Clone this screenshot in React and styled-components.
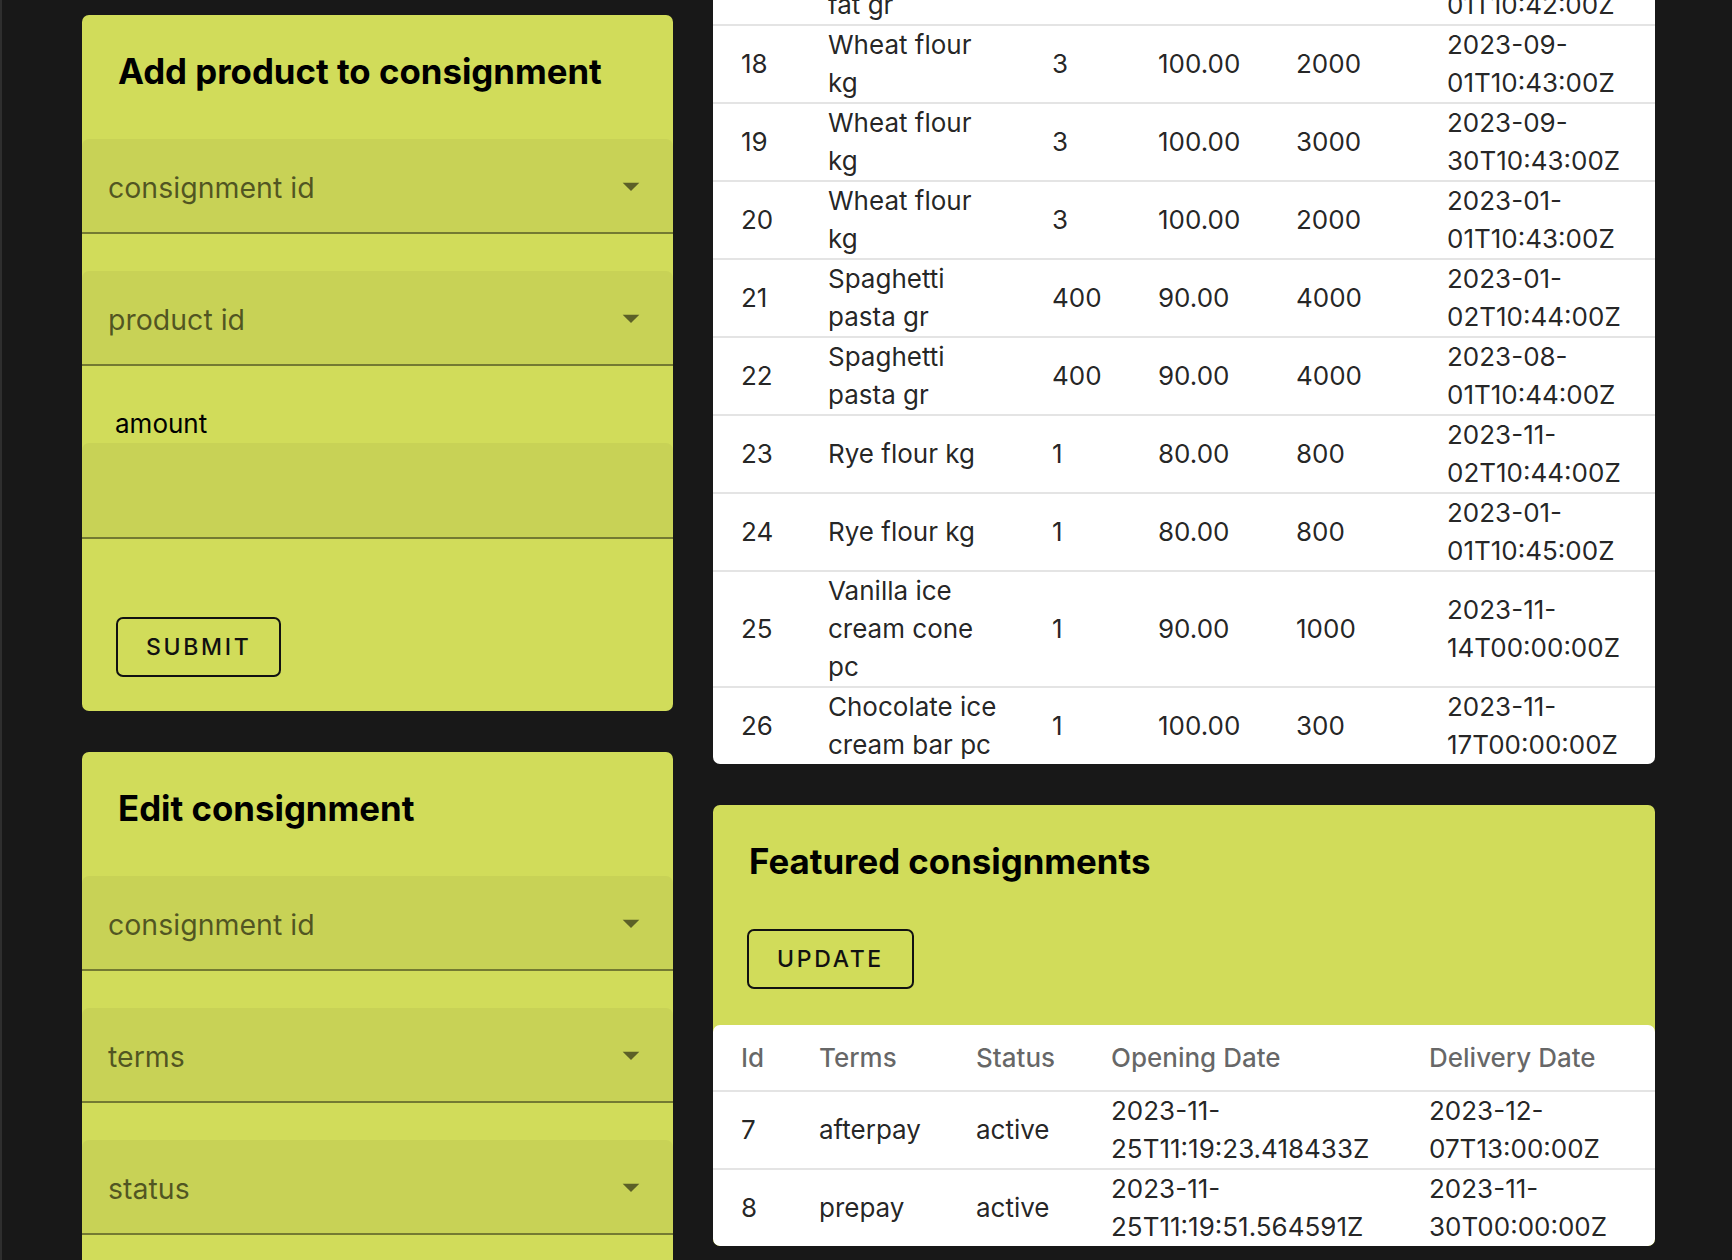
import React from "react";
import styled, { createGlobalStyle } from "styled-components";

const GlobalStyle = createGlobalStyle`
  html, body {
    margin: 0;
    overflow: hidden;
    background: #181818;
    font-family: Inter, "Noto Sans", "Liberation Sans", sans-serif;
  }
`;

const Page = styled.div`
  display: grid;
  grid-template-columns: 591px 942px;
  column-gap: 40px;
  align-items: start;
  height: 100vh;
  box-sizing: border-box;
  padding: 15px 0 0 80px;
  border-left: 2px solid #2e2e2e;
`;

const Column = styled.div`
  display: flex;
  flex-direction: column;
  gap: 41px;
`;

const Panel = styled.section`
  background: #d1dc5a;
  border-radius: 7px;
  padding: 30px 0 ${p => (p.$flush ? "0" : "34px")};
  overflow: hidden;
`;

const PanelTitle = styled.h2`
  margin: 0 0 41px;
  padding: 0 36px;
  font-size: 34.8px;
  line-height: 53px;
  font-weight: 700;
  color: #000;
`;

const Form = styled.div`
  display: flex;
  flex-direction: column;
  gap: 37px;
`;

const SelectBox = styled.div`
  height: 95px;
  box-sizing: border-box;
  display: flex;
  align-items: center;
  justify-content: space-between;
  padding: 0 22px 0 26px;
  background: rgba(0, 0, 0, 0.045);
  border-bottom: 2px solid rgba(0, 0, 0, 0.42);
  border-radius: 7px 7px 0 0;
`;

const SelectText = styled.span`
  padding-top: 4px;
  font-size: 28.5px;
  line-height: 38px;
  color: rgba(0, 0, 0, 0.6);
`;

const FieldGroup = styled.div`
  display: flex;
  flex-direction: column;
  margin-top: 2px;
`;

const FieldLabel = styled.label`
  padding-left: 33px;
  font-size: 26px;
  line-height: 38px;
  color: #000;
`;

const TextInput = styled.div`
  height: 96px;
  box-sizing: border-box;
  background: rgba(0, 0, 0, 0.045);
  border-bottom: 2px solid rgba(0, 0, 0, 0.42);
  border-radius: 7px 7px 0 0;
`;

const OutlineButton = styled.button`
  align-self: flex-start;
  margin: ${p => p.$top || "0"} 0 0 34px;
  height: 60px;
  box-sizing: border-box;
  padding: 0 28px;
  border: 2px solid #111;
  border-radius: 7px;
  background: transparent;
  font-family: inherit;
  font-size: 23px;
  font-weight: 500;
  letter-spacing: 2.7px;
  color: #111;
`;

const TableCard = styled.div`
  background: #fff;
  border-radius: 7px;
  overflow: hidden;
  margin-top: ${p => p.$top || "0"};
`;

const Table = styled.table`
  width: 100%;
  border-collapse: collapse;
  table-layout: fixed;
  font-size: 26px;
  line-height: 38px;
  color: rgba(0, 0, 0, 0.87);

  tbody tr:last-child td {
    border-bottom: none;
  }
`;

const Th = styled.th`
  padding: 13.5px 28px;
  text-align: left;
  font-weight: 500;
  color: rgba(0, 0, 0, 0.6);
  border-bottom: 2px solid #e4e4e4;
`;

const Td = styled.td`
  padding: 0 ${p => (p.$tight ? "23px" : "28px")} 0 28px;
  vertical-align: middle;
  border-bottom: 2px solid #e4e4e4;
`;

function ArrowDrop() {
  return (
    <svg width="40" height="40" viewBox="0 0 24 24" aria-hidden="true">
      <path d="M7 10l5 5 5-5z" fill="rgba(0,0,0,0.54)" />
    </svg>
  );
}

function Select({ placeholder }) {
  return (
    <SelectBox>
      <SelectText>{placeholder}</SelectText>
      <ArrowDrop />
    </SelectBox>
  );
}

const products = [
  [17, "Butter 82% fat gr", 200, "150.00", 1000, "2023-09-01T10:42:00Z"],
  [18, "Wheat flour kg", 3, "100.00", 2000, "2023-09-01T10:43:00Z"],
  [19, "Wheat flour kg", 3, "100.00", 3000, "2023-09-30T10:43:00Z"],
  [20, "Wheat flour kg", 3, "100.00", 2000, "2023-01-01T10:43:00Z"],
  [21, "Spaghetti pasta gr", 400, "90.00", 4000, "2023-01-02T10:44:00Z"],
  [22, "Spaghetti pasta gr", 400, "90.00", 4000, "2023-08-01T10:44:00Z"],
  [23, "Rye flour kg", 1, "80.00", 800, "2023-11-02T10:44:00Z"],
  [24, "Rye flour kg", 1, "80.00", 800, "2023-01-01T10:45:00Z"],
  [25, "Vanilla ice cream cone pc", 1, "90.00", 1000, "2023-11-14T00:00:00Z"],
  [26, "Chocolate ice cream bar pc", 1, "100.00", 300, "2023-11-17T00:00:00Z"],
];

const consignments = [
  [7, "afterpay", "active", "2023-11-25T11:19:23.418433Z", "2023-12-07T13:00:00Z"],
  [8, "prepay", "active", "2023-11-25T11:19:51.564591Z", "2023-11-30T00:00:00Z"],
];

export default function App() {
  return (
    <>
      <GlobalStyle />
      <Page>
        <Column>
          <Panel>
            <PanelTitle>Add product to consignment</PanelTitle>
            <Form>
              <Select placeholder="consignment id" />
              <Select placeholder="product id" />
              <FieldGroup>
                <FieldLabel>amount</FieldLabel>
                <TextInput />
              </FieldGroup>
              <OutlineButton $top="41px">SUBMIT</OutlineButton>
            </Form>
          </Panel>
          <Panel>
            <PanelTitle>Edit consignment</PanelTitle>
            <Form>
              <Select placeholder="consignment id" />
              <Select placeholder="terms" />
              <Select placeholder="status" />
              <Select placeholder="delivery date" />
              <OutlineButton $top="41px">SUBMIT</OutlineButton>
            </Form>
          </Panel>
        </Column>

        <Column>
          <TableCard $top="-67px">
            <Table>
              <colgroup>
                <col style={{ width: 87 }} />
                <col style={{ width: 224 }} />
                <col style={{ width: 106 }} />
                <col style={{ width: 138 }} />
                <col style={{ width: 151 }} />
                <col style={{ width: 236 }} />
              </colgroup>
              <tbody>
                {products.map(row => (
                  <tr key={row[0]}>
                    {row.map((cell, i) => (
                      <Td key={i} $tight={i === 1}>
                        {cell}
                      </Td>
                    ))}
                  </tr>
                ))}
              </tbody>
            </Table>
          </TableCard>

          <Panel $flush>
            <PanelTitle>Featured consignments</PanelTitle>
            <OutlineButton>UPDATE</OutlineButton>
            <TableCard $top="36px">
              <Table>
                <colgroup>
                  <col style={{ width: 78 }} />
                  <col style={{ width: 157 }} />
                  <col style={{ width: 135 }} />
                  <col style={{ width: 318 }} />
                  <col style={{ width: 254 }} />
                </colgroup>
                <thead>
                  <tr>
                    <Th>Id</Th>
                    <Th>Terms</Th>
                    <Th>Status</Th>
                    <Th>Opening Date</Th>
                    <Th>Delivery Date</Th>
                  </tr>
                </thead>
                <tbody>
                  {consignments.map(row => (
                    <tr key={row[0]}>
                      {row.map((cell, i) => (
                        <Td key={i}>{cell}</Td>
                      ))}
                    </tr>
                  ))}
                </tbody>
              </Table>
            </TableCard>
          </Panel>
        </Column>
      </Page>
    </>
  );
}
